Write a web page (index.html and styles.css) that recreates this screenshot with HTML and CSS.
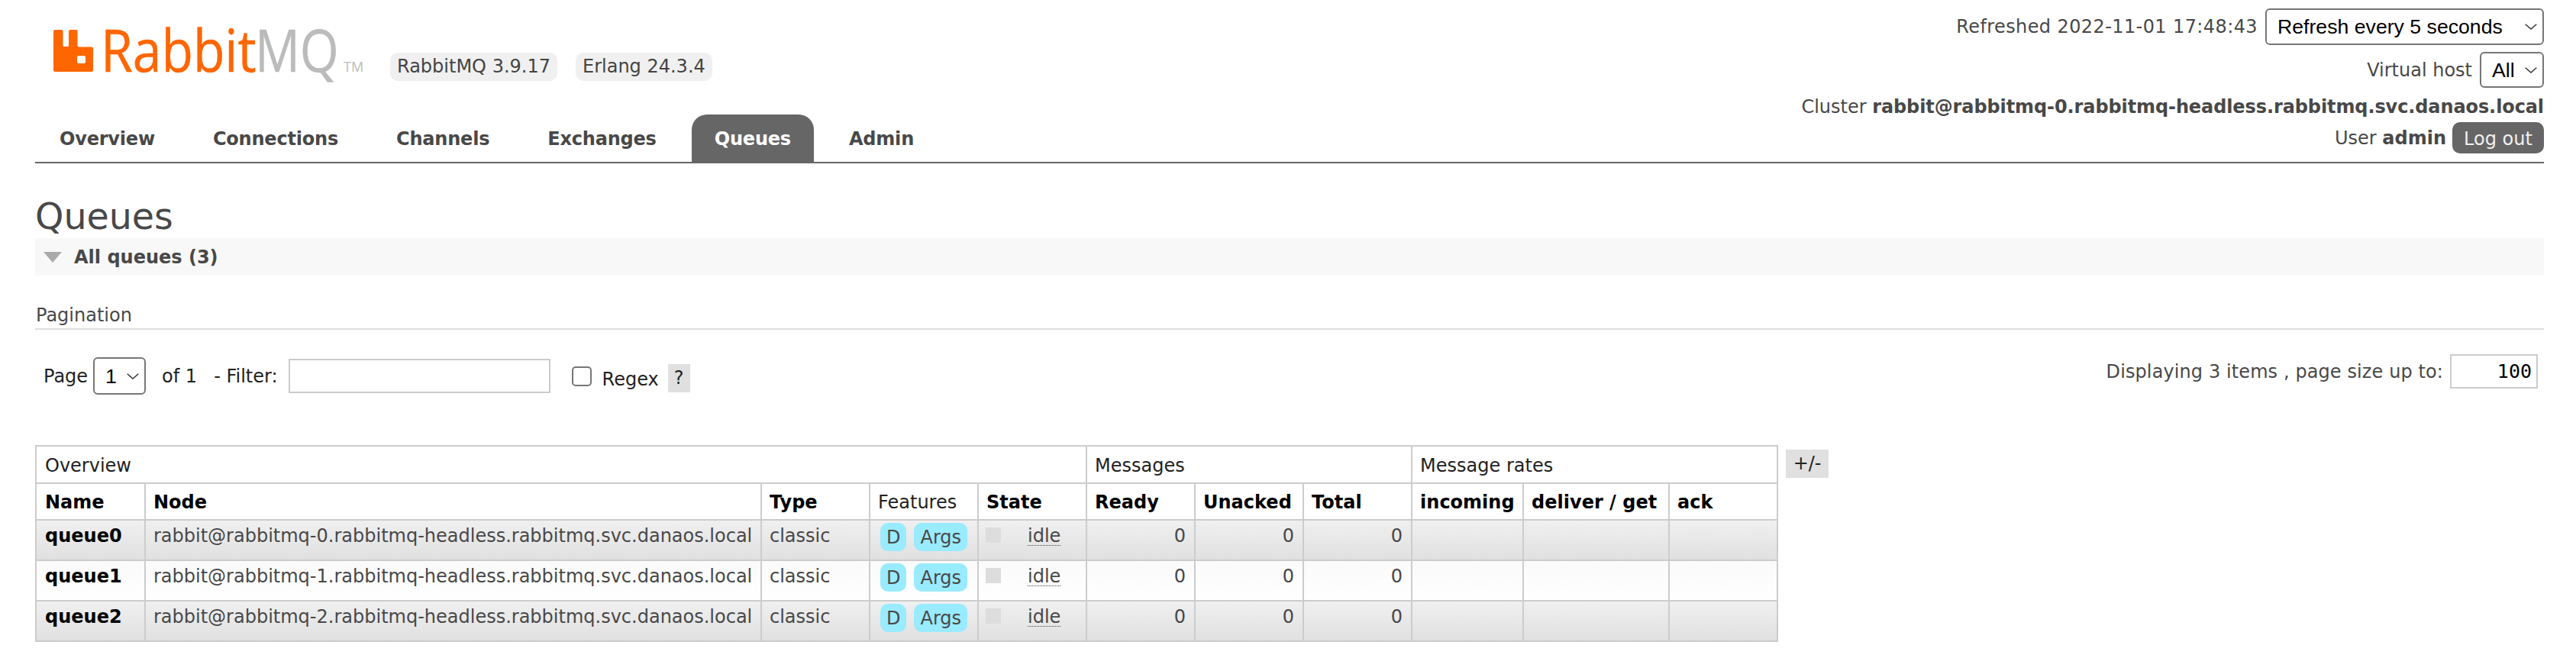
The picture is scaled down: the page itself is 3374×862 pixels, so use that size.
FILE: index.html
```html
<!DOCTYPE html>
<html lang="en">
<head>
<meta charset="utf-8">
<title>RabbitMQ Management</title>
<link rel="stylesheet" href="styles.css">
</head>
<body>
<header class="top">
  <div class="brand">
    <div class="logo-row">
      <svg class="logo" viewBox="0 -20 410 110" width="410" height="110" role="img" aria-label="RabbitMQ">
        <path class="logo-icon" fill-rule="evenodd" d="M2 9h8.500a2 2 0 0 1 2 2v18.500a1.500 1.500 0 0 0 1.500 1.500h4.500a1.500 1.500 0 0 0 1.500-1.500V11a2 2 0 0 1 2-2h7.500a2 2 0 0 1 2 2v18.500a2 2 0 0 0 2 2H50a2 2 0 0 1 2 2V62a2 2 0 0 1-2 2H2a2 2 0 0 1-2-2V11a2 2 0 0 1 2-2zM33 43a2 2 0 0 0-2 2v6a2 2 0 0 0 2 2h7a2 2 0 0 0 2-2v-6a2 2 0 0 0-2-2z"/>
        <text class="logo-rabbit" transform="translate(62 64) scale(.88 1)">Rabbit</text>
        <text class="logo-mq" transform="translate(264 64) scale(.85 1)">MQ</text>
        <text class="logo-tm" x="380" y="64">TM</text>
      </svg>
      <span class="version">RabbitMQ 3.9.17</span>
      <span class="version">Erlang 24.3.4</span>
    </div>
    <nav class="tabs">
      <a class="tab">Overview</a>
      <a class="tab">Connections</a>
      <a class="tab">Channels</a>
      <a class="tab">Exchanges</a>
      <a class="tab tab-active">Queues</a>
      <a class="tab">Admin</a>
    </nav>
  </div>
  <div class="info">
    <div class="info-row info-refresh">
      <span class="refreshed">Refreshed 2022-11-01 17:48:43</span>
      <select class="sel sel-refresh"><option>Refresh every 5 seconds</option></select>
    </div>
    <div class="info-row info-vhost">
      <span>Virtual host</span>
      <select class="sel sel-vhost"><option>All</option></select>
    </div>
    <div class="info-row info-cluster">
      <span>Cluster <b class="cluster-name">rabbit@rabbitmq-0.rabbitmq-headless.rabbitmq.svc.danaos.local</b></span>
    </div>
    <div class="info-row info-user">
      <span>User <b>admin</b></span>
      <button class="logout">Log out</button>
    </div>
  </div>
</header>

<main class="main">
  <h1 class="title">Queues</h1>
  <div class="section-head">
    <span class="tri"></span>
    <span>All queues (3)</span>
  </div>

  <div class="pagination-label">Pagination</div>

  <div class="pager">
    <div class="pager-left">
      <span>Page</span>
      <select class="sel sel-page"><option>1</option></select>
      <span class="pager-of">of 1</span>
      <span class="pager-filter">- Filter:</span>
      <input class="filter" type="text">
      <input class="regex-box" type="checkbox">
      <span class="regex-label">Regex</span>
      <span class="help">?</span>
    </div>
    <div class="pager-right">
      <span class="displaying">Displaying 3 items , page size up to:</span>
      <input class="page-size" type="text" value="100">
    </div>
  </div>

  <div class="table-wrap">
    <table class="list">
      <colgroup>
        <col class="c-name"><col class="c-node"><col class="c-std"><col class="c-std"><col class="c-std"><col class="c-std"><col class="c-std"><col class="c-std"><col class="c-incoming"><col class="c-deliver"><col class="c-ack">
      </colgroup>
      <thead>
        <tr class="group">
          <th colspan="5">Overview</th>
          <th colspan="3">Messages</th>
          <th colspan="3">Message rates</th>
        </tr>
        <tr class="cols">
          <th>Name</th><th>Node</th><th>Type</th><th class="plain">Features</th><th>State</th>
          <th>Ready</th><th>Unacked</th><th>Total</th>
          <th>incoming</th><th>deliver / get</th><th>ack</th>
        </tr>
      </thead>
      <tbody>
        <tr class="alt1">
          <td class="name">queue0</td>
          <td>rabbit@rabbitmq-0.rabbitmq-headless.rabbitmq.svc.danaos.local</td>
          <td>classic</td>
          <td class="features"><div class="feat"><span class="tag">D</span><span class="tag">Args</span></div></td>
          <td class="state"><div class="st"><span class="sq"></span><abbr class="idle">idle</abbr></div></td>
          <td class="num">0</td><td class="num">0</td><td class="num">0</td>
          <td></td><td></td><td></td>
        </tr>
        <tr class="alt2">
          <td class="name">queue1</td>
          <td>rabbit@rabbitmq-1.rabbitmq-headless.rabbitmq.svc.danaos.local</td>
          <td>classic</td>
          <td class="features"><div class="feat"><span class="tag">D</span><span class="tag">Args</span></div></td>
          <td class="state"><div class="st"><span class="sq"></span><abbr class="idle">idle</abbr></div></td>
          <td class="num">0</td><td class="num">0</td><td class="num">0</td>
          <td></td><td></td><td></td>
        </tr>
        <tr class="alt1">
          <td class="name">queue2</td>
          <td>rabbit@rabbitmq-2.rabbitmq-headless.rabbitmq.svc.danaos.local</td>
          <td>classic</td>
          <td class="features"><div class="feat"><span class="tag">D</span><span class="tag">Args</span></div></td>
          <td class="state"><div class="st"><span class="sq"></span><abbr class="idle">idle</abbr></div></td>
          <td class="num">0</td><td class="num">0</td><td class="num">0</td>
          <td></td><td></td><td></td>
        </tr>
      </tbody>
    </table>
    <span class="plusminus">+/-</span>
  </div>
</main>
</body>
</html>
```
FILE: styles.css
```css
* { box-sizing: border-box; }
html, body { margin: 0; padding: 0; background: #fff; }
body {
  font-family: "DejaVu Sans", sans-serif;
  font-size: 24px;
  line-height: 28px;
  color: #484848;
  overflow: hidden;
}

/* header */
.top {
  display: flex;
  justify-content: space-between;
  height: 214px;
  margin: 0 42px 0 46px;
  border-bottom: 2px solid #666;
}
.brand { display: flex; flex-direction: column; justify-content: space-between; }
.logo-row { display: flex; align-items: flex-start; padding: 10px 0 0 24px; }
.logo { flex: none; }
.logo-icon { fill: #f60; }
.logo-rabbit { font: 400 77px "Open Sans", sans-serif; fill: #f60; stroke: #f60; stroke-width: .5px; }
.logo-mq { font: 400 77px "Open Sans", sans-serif; fill: #bbb; stroke: #bbb; stroke-width: .5px; }
.logo-tm { font: 400 18px "Open Sans", sans-serif; fill: #bbb; }
.version {
  height: 37px;
  margin: 59px 0 0 31px;
  padding: 4px 9px;
  border-radius: 10px;
  background: #f0f0f0;
  line-height: 29px;
  color: #444;
}
.version + .version { margin-left: 24px; }

.tabs { display: flex; gap: 16px; padding-left: 2px; }
.tab {
  display: block;
  height: 62px;
  padding: 0 30px;
  border-radius: 20px 20px 0 0;
  font-weight: 700;
  letter-spacing: -.2px;
  line-height: 64px;
  color: #484848;
}
.tabs .tab-active { background: #666; color: #fff; }

.info { display: flex; flex-direction: column; align-items: flex-end; padding-top: 11px; }
.info-row { display: flex; align-items: center; justify-content: flex-end; gap: 10px; white-space: nowrap; }
.info-refresh { height: 48px; }
.info-vhost { height: 47px; margin-top: 9px; }
.info-cluster { height: 28px; margin-top: 11px; }
.info-user { height: 41px; margin-top: 6px; gap: 8px; }
.refreshed { letter-spacing: .4px; }
.cluster-name { letter-spacing: -.1px; }

.sel {
  appearance: none;
  height: 48px;
  padding: 0 30px 0 14px;
  border: 2px solid #767676;
  border-radius: 6px;
  background: #fff url("data:image/svg+xml,%3Csvg xmlns='http://www.w3.org/2000/svg' width='16' height='8' viewBox='0 0 16 8'%3E%3Cpath d='M.7.7 8 7 15.300.7' fill='none' stroke='%23333' stroke-width='1.500'/%3E%3C/svg%3E") no-repeat right 7px center;
  font: 400 26.67px "Liberation Sans", sans-serif;
  color: #000;
}
.sel-refresh { width: 365px; }
.sel-vhost { width: 84px; height: 47px; }
.sel-page { width: 69px; height: 49px; }

.logout {
  width: 120px;
  height: 41px;
  padding: 2px 0 0;
  border: 0;
  border-radius: 10px;
  background: #666;
  font: 400 24px "DejaVu Sans", sans-serif;
  color: #f0f0f0;
}

/* main */
.main { margin: 0 42px 0 46px; }
.title {
  height: 98px;
  margin: 0;
  padding-top: 46px;
  font-size: 47.500px;
  font-weight: 400;
  line-height: 48px;
  color: #484848;
}
.section-head {
  display: flex;
  align-items: center;
  gap: 16px;
  height: 49px;
  padding-left: 11px;
  background: #f8f8f8;
  font-weight: 700;
}
.tri {
  width: 0;
  height: 0;
  border-left: 12px solid transparent;
  border-right: 12px solid transparent;
  border-top: 14px solid #aaa;
}
.pagination-label {
  height: 71px;
  margin-top: 0;
  padding: 38px 0 0 1px;
  border-bottom: 2px solid #ddd;
  line-height: 28px;
}

.pager { display: flex; justify-content: space-between; align-items: flex-start; margin-top: 32px; }
.pager-left { display: flex; align-items: center; height: 49px; margin-top: 4px; padding-left: 11px; color: #222; }
.sel-page { margin-left: 7px; }
.pager-of { margin-left: 21px; }
.pager-filter { margin-left: 22px; }
.filter {
  width: 343px;
  height: 45px;
  margin: 0 0 0 14px;
  border: 2px solid #ccc;
  background: #fff;
}
.regex-box {
  appearance: none;
  width: 26px;
  height: 26px;
  margin: 0 0 0 28px;
  border: 2px solid #767676;
  border-radius: 5px;
  background: #fff;
}
.regex-label { margin: 8px 0 0 14px; }
.help {
  width: 29px;
  height: 37px;
  margin: 6px 0 0 12px;
  background: #e0e0e0;
  line-height: 37px;
  text-align: center;
}
.pager-right { display: flex; align-items: center; gap: 9px; height: 45px; padding-right: 8px; }
.displaying { letter-spacing: .1px; }
.page-size {
  width: 115px;
  height: 45px;
  margin: 0;
  padding: 0 6px;
  border: 2px solid #ccc;
  background: #fff;
  font: 400 25px "DejaVu Sans Mono", monospace;
  color: #000;
  text-align: right;
}

/* table */
.table-wrap { display: flex; align-items: flex-start; margin-top: 66px; }
.list {
  width: 2282px;
  flex: none;
  table-layout: fixed;
  border-collapse: collapse;
  border: 2px solid #ccc;
}
.c-name { width: 143px; }
.c-node { width: 807px; }
.c-std { width: 142px; }
.c-incoming { width: 146px; }
.c-deliver { width: 191px; }
.c-ack { width: 142px; }
.list th, .list td {
  padding: 0 11px 0 10px;
  border: 2px solid #ccc;
  text-align: left;
  white-space: nowrap;
}
.list tr > :first-child { padding-left: 11px; }
.group th { height: 49px; padding-top: 2px; font-weight: 400; color: #222; }
.cols th { height: 48px; padding-top: 2px; font-weight: 700; color: #000; }
.cols .plain { font-weight: 400; color: #222; }
.list td { height: 53px; padding-top: 6px; padding-bottom: 0; vertical-align: top; }
.alt1 { background: linear-gradient(#f0f0f0, #e0e0e0); }
.alt2 { background: linear-gradient(#fafafa, #fff); }
.list .name { font-weight: 700; color: #000; }
.list .num { text-align: right; }
.list .features { padding: 3px 0 0 13px; }
.feat { display: flex; gap: 10px; }
.tag {
  height: 37px;
  padding: 0 8px;
  border-radius: 10px;
  background: #99ebff;
  line-height: 38px;
}
.list .state { padding: 9px 0 0 9px; }
.st { display: flex; align-items: flex-start; }
.sq { width: 20px; height: 20px; background: #ddd; }
.idle {
  height: 27px;
  margin: -3px 0 0 35px;
  border-bottom: 1px dotted #484848;
  line-height: 28px;
}
.plusminus {
  width: 56px;
  height: 37px;
  margin: 6px 0 0 10px;
  background: #e0e0e0;
  line-height: 37px;
  text-align: center;
  color: #222;
}
```
